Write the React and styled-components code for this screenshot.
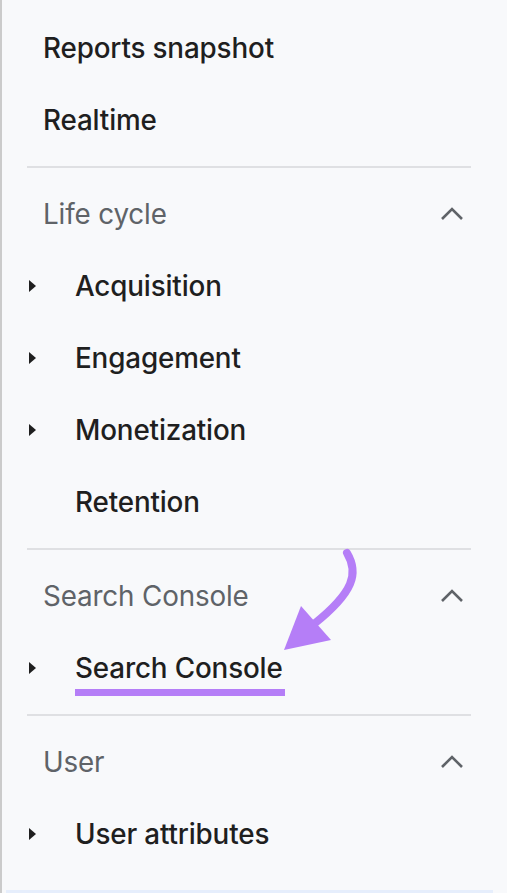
import React from 'react'
import styled, { createGlobalStyle } from 'styled-components'

const GlobalStyle = createGlobalStyle`
  html, body {
    margin: 0;
    padding: 0;
    background: #f8f9fb;
  }
  body {
    font-family: Inter, "Noto Sans", sans-serif;
  }
`

const Sidebar = styled.nav`
  position: relative;
  box-sizing: border-box;
  width: 507px;
  height: 893px;
  padding-top: 12px;
  border-left: 2px solid #cbcbcb;
  background: #f8f9fb;
  overflow: hidden;

  &::after {
    content: '';
    position: absolute;
    left: 4px;
    right: 14px;
    bottom: 0;
    height: 3px;
    background: #e6eefc;
  }
`

const Row = styled.div`
  display: flex;
  align-items: center;
  height: 72px;
  padding-left: ${p => (p.$indent ? '27px' : '41px')};
  padding-right: 43px;
  box-sizing: border-box;
`

const Label = styled.span`
  position: relative;
  font-size: 27.8px;
  font-weight: ${p => (p.$muted ? 400 : 500)};
  color: ${p => (p.$muted ? '#5f6368' : '#1f1f1f')};
  letter-spacing: -0.15px;
  flex: 1;
`

const Highlighted = styled.span`
  position: relative;

  &::after {
    content: '';
    position: absolute;
    left: 0;
    right: -2px;
    top: 100%;
    margin-top: 4px;
    height: 7px;
    background: #b57ef7;
  }
`

const Caret = styled.span`
  width: 0;
  height: 0;
  border-top: 6px solid transparent;
  border-bottom: 6px solid transparent;
  border-left: 7px solid #1f1f1f;
  margin-right: 39px;
`

const Divider = styled.hr`
  border: none;
  height: 2px;
  background: #dfe0e3;
  margin: 10px 36px 10px 25px;
`

const Chevron = () => (
  <svg width="24" height="24" viewBox="0 0 24 24">
    <path d="M2 17 L12 7 L22 17" fill="none" stroke="#5f6368" strokeWidth="2.6" />
  </svg>
)

const Arrow = styled.svg`
  position: absolute;
  left: 0;
  top: 0;
  pointer-events: none;
`

const SectionHeader = ({ title }) => (
  <Row>
    <Label $muted>{title}</Label>
    <Chevron />
  </Row>
)

const Item = ({ label, caret, children }) => (
  <Row $indent={caret !== undefined}>
    {caret !== undefined && <Caret style={{ visibility: caret ? 'visible' : 'hidden' }} />}
    <Label>{children || label}</Label>
  </Row>
)

export default function App() {
  return (
    <>
      <GlobalStyle />
      <Sidebar>
        <Item label="Reports snapshot" />
        <Item label="Realtime" />
        <Divider />
        <SectionHeader title="Life cycle" />
        <Item caret label="Acquisition" />
        <Item caret label="Engagement" />
        <Item caret label="Monetization" />
        <Item caret={false} label="Retention" />
        <Divider />
        <SectionHeader title="Search Console" />
        <Item caret>
          <Highlighted>Search Console</Highlighted>
        </Item>
        <Divider />
        <SectionHeader title="User" />
        <Item caret label="User attributes" />
        <Arrow width="507" height="893">
          <path
            d="M345 553 C357 573, 352 592, 312 624"
            fill="none"
            stroke="#b57ef7"
            strokeWidth="8"
            strokeLinecap="round"
          />
          <polygon points="282,650 299,606 329,640" fill="#b57ef7" />
        </Arrow>
      </Sidebar>
    </>
  )
}
